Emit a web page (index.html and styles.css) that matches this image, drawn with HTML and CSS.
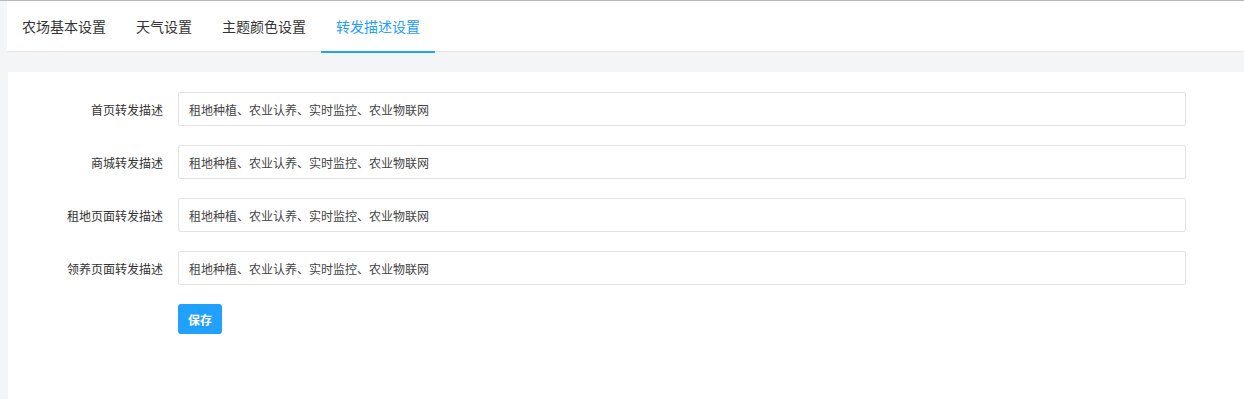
FILE: index.html
```html
<!DOCTYPE html>
<html lang="zh-CN">
<head>
    <meta charset="UTF-8">
    <meta name="viewport" content="width=device-width, initial-scale=1.0">
    <title>转发描述设置</title>
    <link rel="stylesheet" href="styles.css">
</head>
<body>
    <div class="page">
        <div class="tabs">
            <div class="tab">农场基本设置</div>
            <div class="tab">天气设置</div>
            <div class="tab">主题颜色设置</div>
            <div class="tab active">转发描述设置</div>
        </div>

        <div class="panel">
            <form class="share-form">
                <div class="form-row">
                    <label class="form-label" for="home">首页转发描述</label>
                    <input class="form-input" type="text" id="home" value="租地种植、农业认养、实时监控、农业物联网">
                </div>
                <div class="form-row">
                    <label class="form-label" for="mall">商城转发描述</label>
                    <input class="form-input" type="text" id="mall" value="租地种植、农业认养、实时监控、农业物联网">
                </div>
                <div class="form-row">
                    <label class="form-label" for="rent">租地页面转发描述</label>
                    <input class="form-input" type="text" id="rent" value="租地种植、农业认养、实时监控、农业物联网">
                </div>
                <div class="form-row">
                    <label class="form-label" for="adopt">领养页面转发描述</label>
                    <input class="form-input" type="text" id="adopt" value="租地种植、农业认养、实时监控、农业物联网">
                </div>
                <div class="form-row">
                    <span class="form-label"></span>
                    <button type="button" class="save-button">保存</button>
                </div>
            </form>
        </div>
    </div>
</body>
</html>
```

FILE: styles.css
```css
html, body {
    margin: 0;
    padding: 0;
    height: 100%;
}

body {
    font-family: "Noto Sans CJK SC", "Liberation Sans", sans-serif;
    background-color: #f4f5f7;
    border-top: 1px solid #b8b8b8;
    box-sizing: border-box;
}

.page {
    padding-left: 7px;
    height: 100%;
    display: flex;
    flex-direction: column;
}

.tabs {
    display: flex;
    height: 50px;
    background-color: #fff;
    border-bottom: 1px solid #e4e4e4;
}

.tab {
    position: relative;
    padding: 0 15px;
    line-height: 50px;
    font-size: 14px;
    color: #333;
}

.tab.active {
    color: #20a0ff;
}

.tab.active::after {
    content: "";
    position: absolute;
    left: 0;
    right: 0;
    bottom: -2px;
    height: 2px;
    background-color: #20a0ff;
}

.panel {
    flex: 1;
    margin-top: 20px;
    margin-left: 1px;
    background-color: #fff;
    padding: 20px 58px 0 0;
}

.form-row {
    display: flex;
    align-items: center;
    margin-bottom: 19px;
}

.form-label {
    width: 170px;
    flex-shrink: 0;
    box-sizing: border-box;
    padding-right: 15px;
    text-align: right;
    font-size: 12px;
    color: #333;
}

.form-input {
    flex: 1;
    height: 34px;
    box-sizing: border-box;
    padding: 0 10px;
    border: 1px solid #e3e3e3;
    border-radius: 2px;
    font-family: inherit;
    font-size: 12px;
    color: #444;
    outline: none;
}

.save-button {
    width: 44px;
    height: 30px;
    padding: 0;
    border: none;
    border-radius: 3px;
    background-color: #20a0ff;
    color: #fff;
    font-family: inherit;
    font-size: 12px;
    font-weight: bold;
    cursor: pointer;
}
```
